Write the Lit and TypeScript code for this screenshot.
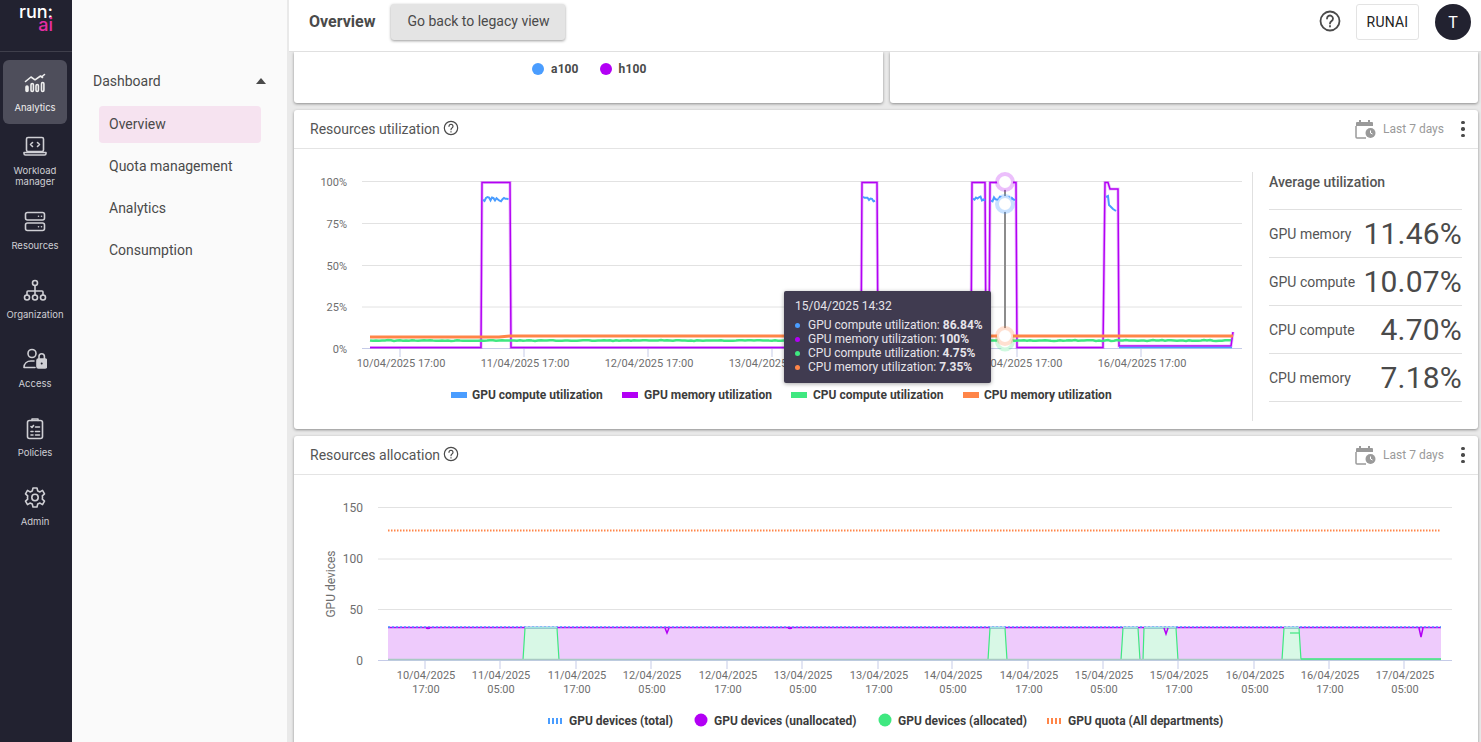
import { LitElement, html, css, svg } from "lit";
import { customElement } from "lit/decorators.js";

const C = { blue: "#4a9dff", purple: "#b300f5", green: "#3fe880", orange: "#ff8548" };

function wiggle(x0: number, x1: number, base: number, amp: number, seed: number, step = 1.5) {
  const p: string[] = [];
  let s = seed;
  for (let x = x0; x <= x1; x += step) {
    s = (s * 9301 + 49297) % 233280;
    p.push(`${x.toFixed(1)},${(base + (s / 233280 - 0.5) * amp).toFixed(1)}`);
  }
  return p.join(" ");
}

const navItems: [string, unknown, boolean][] = [
  ["Analytics", svg`<path d="M2.500 9.500 8 5l4 2.800L17.500 4l2 1.500M21.500 2.500 18.500 5"/><rect class="solid" x="3" y="14" width="2" height="5.500" rx="1"/><rect x="8" y="11.500" width="2.400" height="8" rx="1.200"/><rect x="13" y="12.500" width="2.400" height="7" rx="1.200"/><rect x="18.500" y="10.500" width="2.400" height="9" rx="1.200"/>`, true],
  ["Workload<br>manager", svg`<rect x="3.500" y="2.500" width="17" height="14" rx="1.500"/><path d="M1 17.500h22v1a1.500 1.500 0 0 1-1.500 1.500h-19A1.500 1.500 0 0 1 1 18.500zM9.500 7.500l-2 2 2 2M14.500 7.500l2 2-2 2"/>`, false],
  ["Resources", svg`<rect x="2.500" y="2.500" width="19" height="7.500" rx="2"/><rect x="2.500" y="13" width="19" height="7.500" rx="2"/><path d="M15.500 6.200h.01M18.500 6.200h.01M15.500 16.700h.01M18.500 16.700h.01"/>`, false],
  ["Organization", svg`<circle cx="12" cy="4" r="2.500"/><circle cx="4" cy="18.500" r="2.500"/><circle cx="12" cy="18.500" r="2.500"/><circle cx="20" cy="18.500" r="2.500"/><path d="M12 6.500V16M4 16v-3a1 1 0 0 1 1-1h14a1 1 0 0 1 1 1v3"/>`, false],
  ["Access", svg`<circle cx="9" cy="5.500" r="4"/><path d="M1 19.500c0-4 3-6.500 7-6.500h3M1 19.500h11"/><rect class="solid" x="14" y="11" width="9.500" height="9" rx="1.500"/><path d="M16 11V8.500a2.700 2.700 0 0 1 5.400 0V11"/><circle class="hole" cx="18.700" cy="15.500" r="1"/>`, false],
  ["Policies", svg`<rect x="4.500" y="3.500" width="15" height="18" rx="2"/><path d="M9 3.500V2h6v1.500M8 9.500l1 1 1.500-2M12.500 10h4M8 14.500h2M12.500 14.500h4M8 18h2M12.500 18h4"/>`, false],
  ["Admin", svg`<circle cx="12" cy="11.500" r="3.200"/><path d="M10 2h4l.7 2.900 2.300 1 2.500-1.500 2 3.400-2.200 2a7 7 0 0 1 0 3.400l2.200 2-2 3.400-2.500-1.500-2.300 1-.7 2.900h-4l-.7-2.900-2.300-1-2.500 1.500-2-3.400 2.200-2a7 7 0 0 1 0-3.400l-2.200-2 2-3.400L7 5.900l2.300-1z"/>`, false],
];

@customElement("app-root")
export class AppRoot extends LitElement {
  static styles = css`
    :host { display: flex; width: 100%; height: 100vh; overflow: hidden; font-family: Roboto, "Liberation Sans", sans-serif; color: #4a4a4a; background: #e9e9e9; }
    * { box-sizing: border-box; }
    .rail { width: 72px; flex: none; background: #222230; color: #cfcfd4; display: flex; flex-direction: column; align-items: center; }
    .logo { height: 52px; width: 100%; flex: none; border-bottom: 1px solid #3f3f4b; display: flex; flex-direction: column; align-items: center; padding-top: 5px; line-height: 13px; font-family: Inter, Roboto, sans-serif; font-size: 18px; font-weight: 500; }
    .logo .r { color: #fff; height: 13px; }
    .logo .a { color: #e62ea5; align-self: flex-end; padding-right: 19px; height: 13px; }
    .items { display: flex; flex-direction: column; align-items: center; padding: 8px 2px 0 0; gap: 5px; }
    .item { width: 64px; height: 64px; border-radius: 6px; display: flex; flex-direction: column; align-items: center; justify-content: center; font-size: 9.500px; line-height: 11px; text-align: center; font-family: Inter, Roboto, sans-serif; }
    .item.on { background: #4e4e5b; color: #eee; }
    .item svg { width: 24px; height: 24px; fill: none; stroke: currentColor; stroke-width: 1.600; stroke-linecap: round; stroke-linejoin: round; margin-bottom: 6px; flex: none; }
    .item svg .solid { fill: currentColor; }
    .item svg .hole { fill: #222230; stroke: none; }
    .sub { width: 215px; flex: none; background: #fafafa; padding: 71px 21px 0 21px; font-size: 14px; }
    .dash { display: flex; justify-content: space-between; align-items: center; height: 20px; }
    .caret { width: 0; height: 0; border: 5px solid transparent; border-top: 0; border-bottom: 6px solid #4a4a4a; }
    .links { margin-top: 15px; margin-left: 6px; margin-right: 5px; display: flex; flex-direction: column; gap: 5px; }
    .links div { height: 37px; padding: 0 0 2px 10px; display: flex; align-items: center; border-radius: 4px; }
    .links .on { background: #f6e3f0; }
    .main { flex: 1; min-width: 0; margin-left: 2px; display: flex; flex-direction: column; }
    .head { height: 52px; flex: none; background: #fff; border-bottom: 1px solid #e0e0e0; display: flex; align-items: center; padding: 0 10px 7px 20px; }
    .head h1 { font-size: 16px; font-weight: 700; margin: -2px 0 0; color: #4a4a4a; }
    .legacy { margin-left: 16px; background: #e4e4e4; border-radius: 3px; height: 36px; padding: 0 15px 2px 16px; display: flex; align-items: center; font-size: 14px; box-shadow: 0 1px 3px rgba(0,0,0,.4); }
    .spacer { flex: 1; }
    .help { width: 24px; height: 24px; margin-right: 14px; fill: none; stroke: #4a4a4a; margin-top: -3px; }
    .runai { width: 63px; height: 36px; border: 1px solid #e3e3e3; border-radius: 3px; display: flex; align-items: center; justify-content: center; color: #222; font-size: 14px; letter-spacing: .2px; margin-right: 16px; }
    .avatar { width: 36px; height: 36px; border-radius: 50%; background: #222230; color: #fff; display: flex; align-items: center; justify-content: center; font-size: 16px; }
    .scroll { flex: 1; min-height: 0; overflow: hidden; padding: 0 3px 0 5px; display: flex; flex-direction: column; gap: 7px; }
    .card { background: #fff; border-radius: 3px; box-shadow: 0 1px 3px rgba(0,0,0,.4); flex: none; }
    .toprow { display: flex; gap: 7px; flex: none; }
    .toprow .card { flex: 1; height: 51px; border-radius: 0 0 3px 3px; display: flex; justify-content: center; gap: 21px; padding: 10px 0 0 2px; font-size: 12px; font-weight: 700; letter-spacing: .1px; }
    .pie { display: flex; align-items: center; gap: 7px; height: 14px; }
    .pie i { width: 12px; height: 12px; border-radius: 50%; }
    .ch { height: 39px; border-bottom: 1px solid #e4e4e4; display: flex; align-items: center; padding: 0 13px 0 16px; font-size: 14px; color: #555; }
    .q { width: 16px; height: 16px; margin-left: 3px; fill: none; stroke: #4a4a4a; margin-top: -3px; }
    .range { display: flex; align-items: center; color: #9a9a9a; font-size: 12px; }
    .range svg { width: 21px; height: 20px; margin-right: 7px; }
    .dots { width: 4px; display: flex; flex-direction: column; gap: 3px; margin-left: 17px; }
    .dots i { width: 3.500px; height: 3.500px; border-radius: 50%; background: #4a4a4a; }
    .util { height: 280px; display: flex; position: relative; }
    .plot { flex: 1; min-width: 0; display: block; }
    .avg { width: 226px; flex: none; margin: 23px 0 8px 0; border-left: 1px solid #e0e0e0; padding: 0 16px 0 16px; }
    .avg h3 { margin: 0 0 16px; height: 21px; font-size: 14px; font-weight: 500; line-height: 20px; color: #555; }
    .row { height: 48px; border-top: 1px solid #e0e0e0; display: flex; justify-content: space-between; align-items: center; font-size: 14px; color: #555; }
    .row:last-child { border-bottom: 1px solid #e0e0e0; height: 49px; }
    .row b { font-size: 30px; font-weight: 400; letter-spacing: .2px; color: #4a4a4a; }
    .tip { position: absolute; left: 490px; top: 142px; width: 207px; height: 92px; background: #403b50; color: #e6e4ea; border-radius: 2px; box-shadow: 0 1px 4px rgba(0,0,0,.35); font-size: 12px; padding: 8px 11px; }
    .tip .t { margin-bottom: 4px; line-height: 15px; }
    .tip .l { display: flex; align-items: center; height: 14px; gap: 8px; white-space: nowrap; }
    .tip .l i { width: 5px; height: 5px; border-radius: 50%; flex: none; }
    .tip .l b { font-weight: 700; }
    .alloc { height: 300px; display: block; width: 100%; }
    text { font-family: Roboto, "Liberation Sans", sans-serif; }
    .ax { font-size: 11px; fill: #6e6e6e; }
    .lg { font-size: 12px; font-weight: 700; fill: #3c3c3c; }
  `;

  utilChart() {
    const xs = [400, 524, 648, 772, 895, 1017, 1141].map((x) => x - 294);
    const lab = ["10/04/2025 17:00", "11/04/2025 17:00", "12/04/2025 17:00", "13/04/2025 17:00", "14/04/2025 17:00", "15/04/2025 17:00", "16/04/2025 17:00"];
    const y = (v: number) => v - 149;
    const X = (v: number) => v - 294;
    const grid = [181.500, 223.500, 265.500, 307, 348.500];
    const yl = ["100%", "75%", "50%", "25%", "0%"];
    const purple = [[370, 347.500], [481, 347.500], [482, 182.500], [510, 182.500], [511, 347.500], [861, 347.500], [862, 182.500], [877, 182.500], [878, 347.500], [971, 347.500], [972, 182.500], [985, 182.500], [986, 347.500], [989, 347.500], [990, 182.500], [1016, 182.500], [1017, 347.500], [1103, 347.500], [1105, 182.500], [1108, 182.500], [1110, 189], [1118, 189], [1119, 346], [1231, 346], [1233, 332]];
    const pts = purple.map(([a, b]) => `${X(a)},${y(b)}`).join(" ");
    const blues = [[483, 509, 199, 11], [863, 876, 199, 21], [973, 985, 199, 31], [991, 1015, 199, 41]];
    return svg`
      <svg class="plot" viewBox="0 0 958 280" width="958" height="280">
        ${grid.map((g, i) => svg`<line x1=${X(362)} x2=${X(1242)} y1=${y(g)} y2=${y(g)} stroke=${i == 4 ? "#c5cbe8" : "#e2e2e2"}/><text class="ax" x=${X(347)} y=${y(g) + 4} text-anchor="end">${yl[i]}</text>`)}
        ${xs.map((x, i) => svg`<line x1=${x} x2=${x} y1=${y(349)} y2=${y(357)} stroke="#c5cbe8"/><text class="ax" x=${x + 1} y=${y(367)} text-anchor="middle">${lab[i]}</text>`)}
        <polyline points=${pts} fill="none" stroke=${C.purple} stroke-opacity=".25" stroke-width="3.200"/>
        <polyline points=${pts} fill="none" stroke=${C.purple} stroke-width="1.500"/>
        ${blues.map(([a, b, c, s]) => svg`<polyline points=${wiggle(X(a), X(b), y(c), 5, s)} fill="none" stroke=${C.blue} stroke-width="2"/>`)}
        <polyline points="${X(1106)},${y(197)} ${X(1108)},${y(196)} ${X(1109)},${y(205)} ${X(1113)},${y(209)} ${X(1116)},${y(211)}" fill="none" stroke=${C.blue} stroke-width="2"/>
        <line x1=${X(1119)} x2=${X(1232)} y1=${y(347.500)} y2=${y(347.500)} stroke=${C.blue} stroke-width="1.500"/>
        <polyline points=${wiggle(X(370), X(1233), y(340.500), .8, 5, 3)} fill="none" stroke=${C.green} stroke-width="2.500"/>
        <polyline points="${X(370)},${y(337)} ${X(499)},${y(337)} ${X(510)},${y(336)} ${X(1233)},${y(336)}" fill="none" stroke=${C.orange} stroke-width="3"/>
        <line x1=${X(1005)} x2=${X(1005)} y1=${y(183)} y2=${y(338)} stroke="#8c8c8c" stroke-width="2"/>
        <circle cx=${X(1005)} cy=${y(341.500)} r="8" fill="#fff" stroke=${C.green} stroke-opacity=".25" stroke-width="4"/>
        <circle cx=${X(1005)} cy=${y(182)} r="8" fill="#fff" stroke=${C.purple} stroke-opacity=".25" stroke-width="4"/>
        <circle cx=${X(1005)} cy=${y(204)} r="8" fill="#fff" stroke=${C.blue} stroke-opacity=".3" stroke-width="4"/>
        <circle cx=${X(1005)} cy=${y(336)} r="8" fill="#fff" stroke=${C.orange} stroke-opacity=".25" stroke-width="4"/>
        ${[[157, C.blue, "GPU compute utilization", 21], [328, C.purple, "GPU memory utilization", 22], [497, C.green, "CPU compute utilization", 22], [669, C.orange, "CPU memory utilization", 21]].map(
          ([x, c, t, o]) => svg`<rect x=${x} y=${y(392)} width="16" height="6" fill=${c as string}/><text class="lg" x=${(x as number) + (o as number)} y=${y(399)}>${t}</text>`
        )}
      </svg>`;
  }

  allocChart() {
    const X = (v: number) => v - 294;
    const y = (v: number) => v - 475;
    const grid = [[507.500, "150"], [559, "100"], [609.500, "50"], [660.500, "0"]] as const;
    const ticks = [425, 500, 576, 651, 727, 802, 878, 952, 1028, 1103, 1178, 1254, 1329, 1404];
    const lab = ["10/04/2025,17:00", "11/04/2025,05:00", "11/04/2025,17:00", "12/04/2025,05:00", "12/04/2025,17:00", "13/04/2025,05:00", "13/04/2025,17:00", "14/04/2025,05:00", "14/04/2025,17:00", "15/04/2025,05:00", "15/04/2025,17:00", "16/04/2025,05:00", "16/04/2025,17:00", "17/04/2025,05:00"];
    const greens = [[523, 525, 557, 559], [988, 990, 1005, 1007], [1121, 1123, 1138, 1140], [1143, 1144, 1176, 1178], [1282, 1284, 1299, 1301]];
    const dips = [[428, 628.500], [667, 633], [790, 628.500], [1166, 634], [1421, 637]];
    return svg`
      <svg class="alloc" viewBox="0 0 1184 300" preserveAspectRatio="xMinYMin">
        ${grid.map(([g, t], i) => svg`<line x1=${X(378)} x2=${X(1452)} y1=${y(g)} y2=${y(g)} stroke=${i == 3 ? "#c5cbe8" : "#e2e2e2"}/><text class="ax" style="font-size:12px" x=${X(363)} y=${y(g) + 4} text-anchor="end">${t}</text>`)}
        <text class="ax" style="font-size:12px" transform="translate(${X(334.500)},${y(584)}) rotate(-90)" text-anchor="middle">GPU devices</text>
        ${ticks.map((x, i) => { const [a, b] = lab[i].split(","); return svg`<line x1=${X(x)} x2=${X(x)} y1=${y(661)} y2=${y(669)} stroke="#c5cbe8"/><text class="ax" x=${X(x) + 1} y=${y(679)} text-anchor="middle">${a}</text><text class="ax" x=${X(x) + 1} y=${y(693)} text-anchor="middle">${b}</text>`; })}
        <rect x=${X(388)} y=${y(627.500)} width=${1441 - 388} height="32.500" fill="#eecbfc"/>
        ${greens.map(([a, b, c, d]) => svg`<polygon points="${X(a)},${y(660)} ${X(b)},${y(628)} ${X(c)},${y(628)} ${X(d)},${y(660)}" fill="#d8f8e6" stroke="none"/><polyline points="${X(a)},${y(660)} ${X(b)},${y(628)} ${X(c)},${y(628)} ${X(d)},${y(660)}" fill="none" stroke=${C.green} stroke-width="1.200"/>`)}
        <line x1=${X(388)} x2=${X(1441)} y1=${y(659.500)} y2=${y(659.500)} stroke="#a9c9c4" stroke-width="1.500"/>
        <line x1=${X(1301)} x2=${X(1441)} y1=${y(659)} y2=${y(659)} stroke=${C.green} stroke-width="1.500"/>
        <line x1=${X(1290)} x2=${X(1299)} y1=${y(633)} y2=${y(633)} stroke=${C.green} stroke-width="1.200"/>
        <line x1=${X(388)} x2=${X(1441)} y1=${y(627.500)} y2=${y(627.500)} stroke=${C.purple} stroke-width="1.500"/>
        <line x1=${X(388)} x2=${X(1441)} y1=${y(627)} y2=${y(627)} stroke=${C.blue} stroke-width="1.500" stroke-dasharray="2 2"/>
        ${greens.map(([a, b, c]) => svg`<line x1=${X(b)} x2=${X(c)} y1=${y(627.500)} y2=${y(627.500)} stroke="#9fe6e0" stroke-width="1.800"/>`)}
        ${dips.map(([x, d]) => svg`<polyline points="${X(x - 2)},${y(628)} ${X(x)},${y(d)} ${X(x + 2)},${y(628)}" fill="none" stroke=${C.purple} stroke-width="1.500"/>`)}
        <line x1=${X(388)} x2=${X(1441)} y1=${y(530.500)} y2=${y(530.500)} stroke=${C.orange} stroke-width="2" stroke-dasharray="1.500 1.500"/>
        <g>
          <line x1=${X(548)} x2=${X(562)} y1=${y(721)} y2=${y(721)} stroke=${C.blue} stroke-width="6" stroke-dasharray="2 2"/>
          <text class="lg" x=${X(569)} y=${y(725)}>GPU devices (total)</text>
          <circle cx=${X(701)} cy=${y(720)} r="6.500" fill=${C.purple}/>
          <text class="lg" x=${X(714)} y=${y(725)}>GPU devices (unallocated)</text>
          <circle cx=${X(885)} cy=${y(720)} r="6.500" fill=${C.green}/>
          <text class="lg" x=${X(898)} y=${y(725)}>GPU devices (allocated)</text>
          <line x1=${X(1047)} x2=${X(1061)} y1=${y(721)} y2=${y(721)} stroke=${C.orange} stroke-width="6" stroke-dasharray="2 2"/>
          <text class="lg" x=${X(1068)} y=${y(725)}>GPU quota (All departments)</text>
        </g>
      </svg>`;
  }

  cardHead(title: string) {
    return html`<div class="ch"><span>${title}</span>
      <svg class="q" viewBox="0 0 24 24" stroke-width="1.800"><circle cx="12" cy="12" r="10"/><path d="M9 9.500a3 3 0 1 1 4.500 2.600c-1 .6-1.500 1.200-1.500 2.400" stroke-linecap="round"/><path d="M12 17.500v.5" stroke-linecap="round"/></svg>
      <div class="spacer"></div>
      <div class="range"><svg viewBox="0 0 21 20"><path d="M1 4a1 1 0 0 1 1-1h2V1h2v2h7V1h2v2h2a1 1 0 0 1 1 1v3H1z" fill="#9a9a9a"/><path d="M1 7v11a1 1 0 0 0 1 1h9" fill="none" stroke="#9a9a9a" stroke-width="1.500"/><circle cx="15.500" cy="14" r="5" fill="#9a9a9a"/><path d="M15.500 11.500V14l2 1" stroke="#fff" fill="none"/></svg>Last 7 days</div>
      <div class="dots"><i></i><i></i><i></i></div></div>`;
  }

  render() {
    const tip: [string, string, string][] = [
      [C.blue, "GPU compute utilization:", "86.84%"],
      [C.purple, "GPU memory utilization:", "100%"],
      [C.green, "CPU compute utilization:", "4.75%"],
      [C.orange, "CPU memory utilization:", "7.35%"],
    ];
    const avg = [["GPU memory", "11.46%"], ["GPU compute", "10.07%"], ["CPU compute", "4.70%"], ["CPU memory", "7.18%"]];
    return html`
      <nav class="rail">
        <div class="logo"><span class="r">run:</span><span class="a">ai</span></div>
        <div class="items">
          ${navItems.map(([t, ic, on]) => html`<div class="item ${on ? "on" : ""}"><svg viewBox="0 0 24 24">${ic}</svg><span .innerHTML=${t}></span></div>`)}
        </div>
      </nav>
      <aside class="sub">
        <div class="dash"><span>Dashboard</span><span class="caret"></span></div>
        <div class="links"><div class="on">Overview</div><div>Quota management</div><div>Analytics</div><div>Consumption</div></div>
      </aside>
      <div class="main">
        <header class="head">
          <h1>Overview</h1>
          <div class="legacy">Go back to legacy view</div>
          <div class="spacer"></div>
          <svg class="help" viewBox="0 0 24 24" stroke-width="1.800"><circle cx="12" cy="12" r="9.500"/><path d="M9 9.500a3 3 0 1 1 4.500 2.600c-1 .6-1.500 1.200-1.500 2.400M12 17v.6" stroke-linecap="round"/></svg>
          <div class="runai">RUNAI</div>
          <div class="avatar">T</div>
        </header>
        <div class="scroll">
          <div class="toprow">
            <div class="card"><div class="pie"><i style="background:${C.blue}"></i>a100</div><div class="pie"><i style="background:${C.purple}"></i>h100</div></div>
            <div class="card"></div>
          </div>
          <section class="card">
            ${this.cardHead("Resources utilization")}
            <div class="util">
              ${this.utilChart()}
              <div class="tip">
                <div class="t">15/04/2025 14:32</div>
                ${tip.map(([c, a, b]) => html`<div class="l"><i style="background:${c}"></i><span>${a} <b>${b}</b></span></div>`)}
              </div>
              <div class="avg">
                <h3>Average utilization</h3>
                ${avg.map(([a, b]) => html`<div class="row"><span>${a}</span><b>${b}</b></div>`)}
              </div>
            </div>
          </section>
          <section class="card">
            ${this.cardHead("Resources allocation")}
            ${this.allocChart()}
          </section>
        </div>
      </div>
    `;
  }
}
